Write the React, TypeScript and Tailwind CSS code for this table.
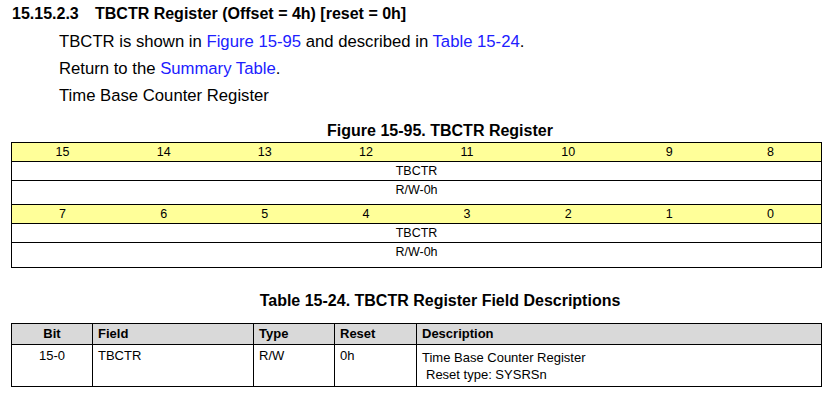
const bitsHi = ['15', '14', '13', '12', '11', '10', '9', '8']
const bitsLo = ['7', '6', '5', '4', '3', '2', '1', '0']

function BitRow({ bits }: { bits: string[] }) {
  return (
    <div className="grid grid-cols-8 h-[19px] bg-[#ffff99] border-b border-black">
      {bits.map(b => (
        <div key={b} className="text-center text-[12.5px] leading-[19px]">
          {b}
        </div>
      ))}
    </div>
  )
}

function FieldRows({ last }: { last?: boolean }) {
  return (
    <>
      <div className="h-[19px] border-b border-black text-center text-[12.5px] leading-[19px]">TBCTR</div>
      <div className={`h-[24px] text-center text-[12.5px] leading-[19px] ${last ? '' : 'border-b border-black'}`}>
        R/W-0h
      </div>
    </>
  )
}

export default function App() {
  return (
    <div className="w-[832px] h-[393px] bg-white text-black font-['Liberation_Sans',Arial,sans-serif] overflow-hidden">
      <h1 className="flex pl-[12px] pt-[5px] text-[16px] font-bold leading-[18px]">
        <span className="w-[83px]">15.15.2.3</span>
        <span>TBCTR Register (Offset = 4h) [reset = 0h]</span>
      </h1>
      <div className="pl-[59px] pt-[5px] text-[16.7px] leading-[27px]">
        <p>
          TBCTR is shown in <span className="text-[#2020ff]">Figure 15-95</span> and described in{' '}
          <span className="text-[#2020ff]">Table 15-24</span>.
        </p>
        <p>
          Return to the <span className="text-[#2020ff]">Summary Table</span>.
        </p>
        <p>Time Base Counter Register</p>
      </div>

      <div className="mt-[13px] text-center text-[16px] font-bold leading-[18px] pl-[48px]">
        Figure 15-95. TBCTR Register
      </div>
      <div className="ml-[11px] mt-[2px] w-[811px] border border-black">
        <BitRow bits={bitsHi} />
        <FieldRows />
        <BitRow bits={bitsLo} />
        <FieldRows last />
      </div>

      <div className="mt-[24px] text-center text-[16px] font-bold leading-[18px] pl-[48px]">
        Table 15-24. TBCTR Register Field Descriptions
      </div>
      <table className="ml-[11px] mt-[13px] w-[811px] border-collapse text-[13px]">
        <thead>
          <tr className="bg-[#d9d9d9] h-[20px] font-bold">
            <th className="w-[81px] border border-black text-center font-bold">Bit</th>
            <th className="w-[161px] border border-black text-left pl-[5px] font-bold">Field</th>
            <th className="w-[81px] border border-black text-left pl-[5px] font-bold">Type</th>
            <th className="w-[82px] border border-black text-left pl-[5px] font-bold">Reset</th>
            <th className="border border-black text-left pl-[5px] font-bold">Description</th>
          </tr>
        </thead>
        <tbody>
          <tr className="h-[42px] align-top">
            <td className="border border-black text-center pt-[1px]">15-0</td>
            <td className="border border-black pl-[5px] pt-[1px]">TBCTR</td>
            <td className="border border-black pl-[5px] pt-[1px]">R/W</td>
            <td className="border border-black pl-[5px] pt-[1px]">0h</td>
            <td className="border border-black pl-[5px] pt-[4px] leading-[17px]">
              <div>Time Base Counter Register</div>
              <div className="pl-[4px]">Reset type: SYSRSn</div>
            </td>
          </tr>
        </tbody>
      </table>
    </div>
  )
}
